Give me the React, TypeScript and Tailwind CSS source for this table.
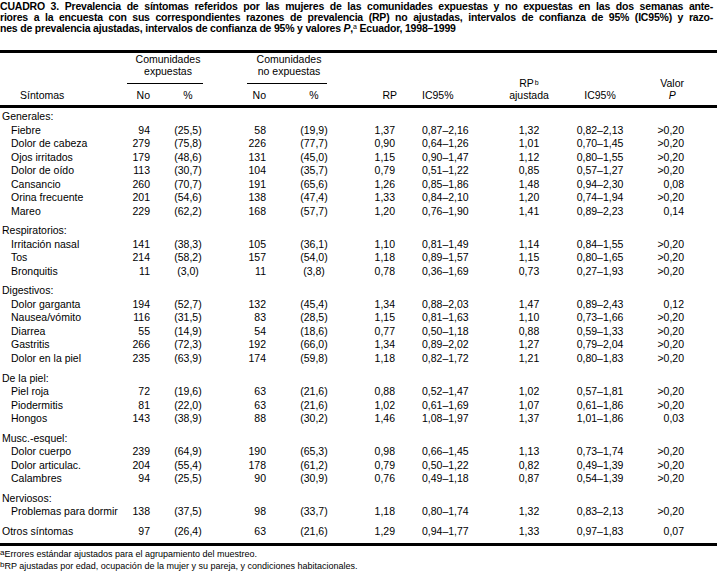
import React from "react";

type Row = { label: string; g?: boolean; gap?: boolean; v?: string[] };

const rows: Row[] = [
  { label: "Generales:", g: true },
  { label: "Fiebre", v: ["94", "(25,5)", "58", "(19,9)", "1,37", "0,87–2,16", "1,32", "0,82–2,13", ">0,20"] },
  { label: "Dolor de cabeza", v: ["279", "(75,8)", "226", "(77,7)", "0,90", "0,64–1,26", "1,01", "0,70–1,45", ">0,20"] },
  { label: "Ojos irritados", v: ["179", "(48,6)", "131", "(45,0)", "1,15", "0,90–1,47", "1,12", "0,80–1,55", ">0,20"] },
  { label: "Dolor de oído", v: ["113", "(30,7)", "104", "(35,7)", "0,79", "0,51–1,22", "0,85", "0,57–1,27", ">0,20"] },
  { label: "Cansancio", v: ["260", "(70,7)", "191", "(65,6)", "1,26", "0,85–1,86", "1,48", "0,94–2,30", "0,08"] },
  { label: "Orina frecuente", v: ["201", "(54,6)", "138", "(47,4)", "1,33", "0,84–2,10", "1,20", "0,74–1,94", ">0,20"] },
  { label: "Mareo", v: ["229", "(62,2)", "168", "(57,7)", "1,20", "0,76–1,90", "1,41", "0,89–2,23", "0,14"] },
  { label: "Respiratorios:", g: true, gap: true },
  { label: "Irritación nasal", v: ["141", "(38,3)", "105", "(36,1)", "1,10", "0,81–1,49", "1,14", "0,84–1,55", ">0,20"] },
  { label: "Tos", v: ["214", "(58,2)", "157", "(54,0)", "1,18", "0,89–1,57", "1,15", "0,80–1,65", ">0,20"] },
  { label: "Bronquitis", v: ["11", "(3,0)", "11", "(3,8)", "0,78", "0,36–1,69", "0,73", "0,27–1,93", ">0,20"] },
  { label: "Digestivos:", g: true, gap: true },
  { label: "Dolor garganta", v: ["194", "(52,7)", "132", "(45,4)", "1,34", "0,88–2,03", "1,47", "0,89–2,43", "0,12"] },
  { label: "Nausea/vómito", v: ["116", "(31,5)", "83", "(28,5)", "1,15", "0,81–1,63", "1,10", "0,73–1,66", ">0,20"] },
  { label: "Diarrea", v: ["55", "(14,9)", "54", "(18,6)", "0,77", "0,50–1,18", "0,88", "0,59–1,33", ">0,20"] },
  { label: "Gastritis", v: ["266", "(72,3)", "192", "(66,0)", "1,34", "0,89–2,02", "1,27", "0,79–2,04", ">0,20"] },
  { label: "Dolor en la piel", v: ["235", "(63,9)", "174", "(59,8)", "1,18", "0,82–1,72", "1,21", "0,80–1,83", ">0,20"] },
  { label: "De la piel:", g: true, gap: true },
  { label: "Piel roja", v: ["72", "(19,6)", "63", "(21,6)", "0,88", "0,52–1,47", "1,02", "0,57–1,81", ">0,20"] },
  { label: "Piodermitis", v: ["81", "(22,0)", "63", "(21,6)", "1,02", "0,61–1,69", "1,07", "0,61–1,86", ">0,20"] },
  { label: "Hongos", v: ["143", "(38,9)", "88", "(30,2)", "1,46", "1,08–1,97", "1,37", "1,01–1,86", "0,03"] },
  { label: "Musc.-esquel:", g: true, gap: true },
  { label: "Dolor cuerpo", v: ["239", "(64,9)", "190", "(65,3)", "0,98", "0,66–1,45", "1,13", "0,73–1,74", ">0,20"] },
  { label: "Dolor articulac.", v: ["204", "(55,4)", "178", "(61,2)", "0,79", "0,50–1,22", "0,82", "0,49–1,39", ">0,20"] },
  { label: "Calambres", v: ["94", "(25,5)", "90", "(30,9)", "0,76", "0,49–1,18", "0,87", "0,54–1,39", ">0,20"] },
  { label: "Nerviosos:", g: true, gap: true },
  { label: "Problemas para dormir", v: ["138", "(37,5)", "98", "(33,7)", "1,18", "0,80–1,74", "1,32", "0,83–2,13", ">0,20"] },
  { label: "Otros síntomas", g: true, gap: true, v: ["97", "(26,4)", "63", "(21,6)", "1,29", "0,94–1,77", "1,33", "0,97–1,83", "0,07"] },
];

const cols = "grid grid-cols-[128px_22px_76px_40px_96px_60px_72px_70px_72px_48px]";

export default function App() {
  return (
    <div className="w-[717px] h-[571px] bg-white text-black font-['Liberation_Sans',Arial,sans-serif] overflow-hidden">
      <div className="w-[713px] h-[34px] font-['Liberation_Sans_Narrow','Liberation_Sans',Arial,sans-serif] font-bold text-[10.5px] leading-[11px] tracking-[-0.2px] pt-[1px]">
        <div className="text-justify [text-align-last:justify]">
          CUADRO 3. Prevalencia de síntomas referidos por las mujeres de las comunidades expuestas y no expuestas en las dos semanas ante-
        </div>
        <div className="text-justify [text-align-last:justify]">
          riores a la encuesta con sus correspondientes razones de prevalencia (RP) no ajustadas, intervalos de confianza de 95% (IC95%) y razo-
        </div>
        <div className="whitespace-nowrap">
          nes de prevalencia ajustadas, intervalos de confianza de 95% y valores <i>P</i>,<sup className="text-[7px] font-normal">a</sup> Ecuador, 1998–1999
        </div>
      </div>

      <div className="mt-[16px] border-t-[3px] border-b-[3px] border-black">
        <div className={`${cols} h-[52px] items-end pb-[4px] text-[10.5px] leading-[12px]`}>
          <div className="pl-[20px]">Síntomas</div>
          <div className="col-span-2 flex flex-col">
            <div className="ml-[-1px] w-[76px] border-b border-black pb-[6px] text-center pl-[6px]">
              <div>Comunidades</div>
              <div>expuestas</div>
            </div>
            <div className="mt-[5px] grid grid-cols-[22px_76px]">
              <div className="text-right">No</div>
              <div className="text-center">%</div>
            </div>
          </div>
          <div className="col-span-2 flex flex-col">
            <div className="ml-[21px] w-[80px] border-b border-black pb-[6px] text-center pl-[4px]">
              <div>Comunidades</div>
              <div>no expuestas</div>
            </div>
            <div className="mt-[5px] grid grid-cols-[40px_96px]">
              <div className="text-right">No</div>
              <div className="text-center">%</div>
            </div>
          </div>
          <div className="text-right pr-[25px]">RP</div>
          <div>IC95%</div>
          <div className="text-center">
            <div>
              RP<sup className="text-[7px] relative top-[-2px] ml-[1px]">b</sup>
            </div>
            <div>ajustada</div>
          </div>
          <div className="text-center">IC95%</div>
          <div className="flex justify-end">
            <div className="text-center">
              <div>Valor</div>
              <div className="italic">P</div>
            </div>
          </div>
        </div>

        <div className="border-t-[3px] border-black pt-[2px] pb-[4px] text-[10.5px]">
          {rows.map((r, i) => (
            <div key={i} className={`${cols} h-[13.5px] leading-[13.5px] ${r.gap ? "mt-[6.2px]" : ""}`}>
              <div className={`whitespace-nowrap ${r.g ? "pl-[2px]" : "pl-[11px]"}`}>{r.label}</div>
              {r.v ? (
                <>
                  <div className="text-right">{r.v[0]}</div>
                  <div className="text-center">{r.v[1]}</div>
                  <div className="text-right">{r.v[2]}</div>
                  <div className="text-center">{r.v[3]}</div>
                  <div className="text-right pr-[27px]">{r.v[4]}</div>
                  <div>{r.v[5]}</div>
                  <div className="text-center">{r.v[6]}</div>
                  <div className="text-center">{r.v[7]}</div>
                  <div className="text-right">{r.v[8]}</div>
                </>
              ) : null}
            </div>
          ))}
        </div>
      </div>

      <div className="pt-[2px] text-[9px] leading-[12px] whitespace-nowrap">
        <div>
          <sup className="text-[8px] top-[-2px]">a</sup>Errores estándar ajustados para el agrupamiento del muestreo.
        </div>
        <div>
          <sup className="text-[8px] top-[-2px]">b</sup>RP ajustadas por edad, ocupación de la mujer y su pareja, y condiciones habitacionales.
        </div>
      </div>
    </div>
  );
}
